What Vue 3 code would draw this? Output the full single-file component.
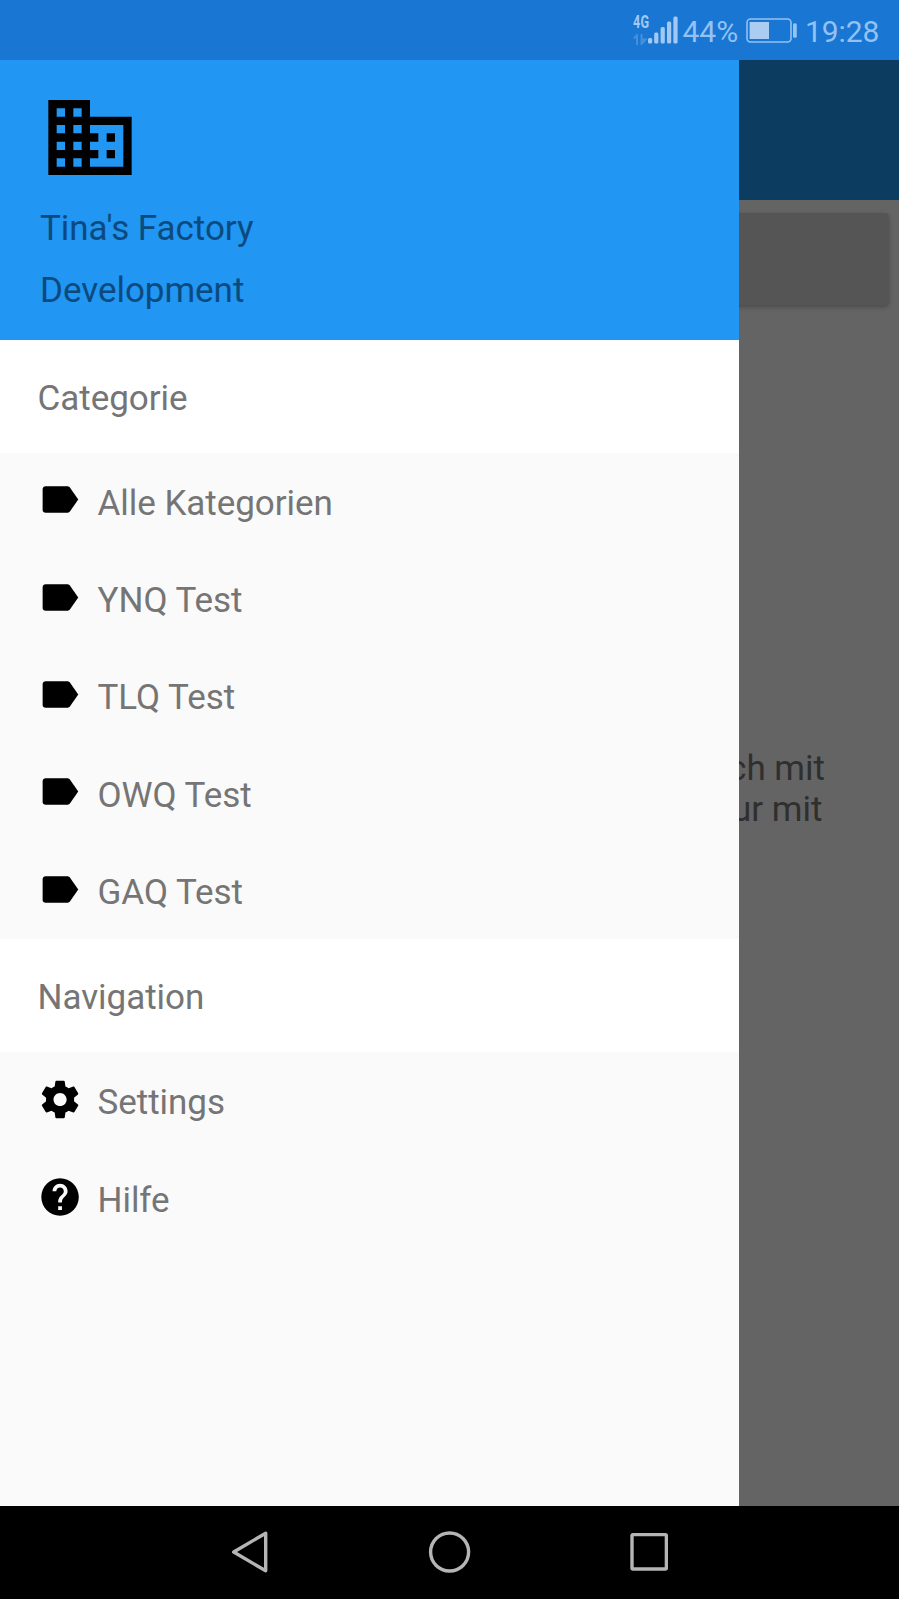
<script setup>
const categories = ['Alle Kategorien', 'YNQ Test', 'TLQ Test', 'OWQ Test', 'GAQ Test']
const icons = {
  label:
    'M17.63 5.7C17.27 5.2 16.67 4.9 16.1 4.9H4.6C3.7 4.9 3 5.5 3 6.4v11.2c0 .9.7 1.5 1.6 1.5h11.5c.57 0 1.17-.3 1.53-.8L22 12z',
  settings:
    'M19.43 12.98c.04-.32.07-.64.07-.98s-.03-.66-.07-.98l2.11-1.65c.19-.15.24-.42.12-.64l-2-3.46c-.12-.22-.39-.3-.61-.22l-2.49 1c-.52-.4-1.08-.73-1.69-.98l-.38-2.65C14.46 2.18 14.25 2 14 2h-4c-.25 0-.46.18-.49.42l-.38 2.65c-.61.25-1.17.59-1.69.98l-2.49-1c-.23-.09-.49 0-.61.22l-2 3.46c-.13.22-.07.49.12.64l2.11 1.65c-.04.32-.07.65-.07.98s.03.66.07.98l-2.11 1.65c-.19.15-.24.42-.12.64l2 3.46c.12.22.39.3.61.22l2.49-1c.52.4 1.08.73 1.69.98l.38 2.65c.03.24.24.42.49.42h4c.25 0 .46-.18.49-.42l.38-2.65c.61-.25 1.17-.59 1.69-.98l2.49 1c.23.09.49 0 .61-.22l2-3.46c.12-.22.07-.49-.12-.64l-2.11-1.65zM12 15.5c-1.93 0-3.5-1.57-3.5-3.5s1.57-3.5 3.5-3.5 3.5 1.57 3.5 3.5-1.57 3.5-3.5 3.5z',
  help:
    'M12 2C6.48 2 2 6.48 2 12s4.48 10 10 10 10-4.48 10-10S17.52 2 12 2zm1 17h-2v-2h2v2zm2.07-7.75l-.9.92C13.45 12.9 13 13.5 13 15h-2v-.5c0-1.1.45-2.1 1.17-2.83l1.24-1.26c.37-.36.59-.86.59-1.41 0-1.1-.9-2-2-2s-2 .9-2 2H8c0-2.21 1.79-4 4-4s4 1.79 4 4c0 .88-.36 1.68-.93 2.25z',
}
const sections = [
  {
    title: 'Categorie',
    items: categories.map((text) => ({ text, icon: icons.label, box: '0 0 24 24' })),
  },
  {
    title: 'Navigation',
    items: [
      { text: 'Settings', icon: icons.settings, box: '-0.3 0 24 24' },
      { text: 'Hilfe', icon: icons.help, box: '-0.3 -0.2 24 24' },
    ],
  },
]
</script>

<template>
  <div class="screen">
    <header class="status">
      <div class="network">
        <span class="gen">4G</span>
        <svg class="arrows" width="14" height="11" viewBox="0 0 14 11">
          <path d="M4 11V1L0.8 4.5M8.5 0v10l4-4.4H9" fill="none" stroke="currentColor" stroke-width="2" />
        </svg>
      </div>
      <svg class="signal" width="30" height="28" viewBox="0 0 30 28" fill="currentColor">
        <rect x="0" y="22" width="4.2" height="5.5" rx="1.5" />
        <rect x="6.2" y="16.5" width="4.2" height="11" rx="1.5" />
        <rect x="12.6" y="11" width="4.2" height="16.5" rx="1.5" />
        <rect x="19" y="5.5" width="4.2" height="22" rx="1.5" />
        <rect x="25.4" y="0.5" width="4.2" height="27" rx="1.5" />
      </svg>
      <span class="percent">44%</span>
      <svg class="battery" width="52" height="26" viewBox="0 0 52 26">
        <rect x="1" y="1" width="44" height="23" rx="3.5" fill="none" stroke="currentColor" stroke-width="1.6" />
        <rect x="3.6" y="4" width="19.4" height="17" fill="#abcdf2" />
        <rect x="47" y="5.2" width="3.8" height="14.5" rx="1.5" fill="currentColor" />
      </svg>
      <span class="time">19:28</span>
    </header>

    <div class="stage">
      <main class="page">
        <div class="appbar"></div>
        <div class="card"></div>
        <p class="message">ch mit<br /><span class="second">ur mit</span></p>
      </main>

      <aside class="drawer">
        <div class="profile">
          <svg class="building" viewBox="0 0.12 24 24">
            <path
              d="M12 7V3H2v18h20V7H12zM6 19H4v-2h2v2zm0-4H4v-2h2v2zm0-4H4V9h2v2zm0-4H4V5h2v2zm4 12H8v-2h2v2zm0-4H8v-2h2v2zm0-4H8V9h2v2zm0-4H8V5h2v2zm10 12h-8v-2h2v-2h-2v-2h2v-2h-2V9h8v10zm-2-8h-2v2h2v-2zm0 4h-2v2h2v-2z"
            />
          </svg>
          <div class="name">Tina's Factory</div>
          <div class="name">Development</div>
        </div>
        <section v-for="section in sections" :key="section.title">
          <h2 class="heading">{{ section.title }}</h2>
          <ul class="list">
            <li v-for="item in section.items" :key="item.text" class="item">
              <svg class="icon" :viewBox="item.box"><path :d="item.icon" /></svg>
              <span class="label">{{ item.text }}</span>
            </li>
          </ul>
        </section>
      </aside>
    </div>

    <nav class="navbar">
      <svg width="40" height="44" viewBox="0 0 40 44">
        <path d="M35.7 3.2v37.6L3.7 22z" />
      </svg>
      <svg width="44" height="44" viewBox="0 0 44 44"><circle cx="22.6" cy="22" r="19" /></svg>
      <svg width="40" height="44" viewBox="0 0 40 44">
        <rect x="4" y="4.6" width="34.4" height="34.4" rx="1" />
      </svg>
    </nav>
  </div>
</template>

<style>
body {
  margin: 0;
  background: #000;
}
</style>

<style scoped>
.screen {
  width: 899px;
  height: 1599px;
  display: flex;
  flex-direction: column;
  overflow: hidden;
  font-family: Roboto, sans-serif;
  font-size: 35px;
  color: #757575;
}
.status {
  height: 60px;
  box-sizing: border-box;
  display: flex;
  align-items: flex-start;
  padding-left: 633px;
  background: #1976d2;
  color: #93c2f3;
  white-space: nowrap;
}
.network {
  width: 15px;
  padding-top: 13px;
  display: flex;
  flex-direction: column;
}
.gen {
  font-size: 17.5px;
  line-height: 19px;
  font-weight: 700;
  color: #a3c9f3;
  transform: scaleX(0.72);
  transform-origin: left;
  letter-spacing: 0.5px;
}
.arrows {
  margin-top: 2px;
  opacity: 0.35;
}
.signal {
  margin: 16px 0 0 0;
  color: #a3c9f3;
}
.percent,
.time {
  font-size: 30px;
  line-height: 36px;
  margin-top: 14px;
}
.percent {
  width: 63px;
  margin-left: 4.5px;
}
.battery {
  margin-top: 18px;
}
.time {
  margin-left: 7.5px;
  letter-spacing: -0.1px;
}
.stage {
  position: relative;
  height: 1446px;
}
.page {
  height: 100%;
  background: #646464;
  overflow: hidden;
}
.appbar {
  height: 140px;
  background: #0c3c5f;
}
.card {
  height: 92px;
  margin: 13px 10px 0;
  border-radius: 4px;
  background: #555;
  box-shadow: 0 2px 4px rgba(0, 0, 0, 0.25);
}
.message {
  margin: 444px 74px 0 0;
  text-align: right;
  line-height: 40.5px;
  color: #2f2f2f;
}
.second {
  margin-right: 2.5px;
}
.drawer {
  position: absolute;
  top: 0;
  left: 0;
  width: 739px;
  height: 100%;
  background: #fafafa;
  letter-spacing: -0.04px;
}
.profile {
  height: 280px;
  box-sizing: border-box;
  padding: 28px 40px 0;
  background: #2196f3;
}
.building {
  display: block;
  width: 100px;
  height: 100px;
  margin-bottom: 10px;
}
.name {
  line-height: 62.4px;
  color: #0c4a7d;
}
.heading {
  margin: 0;
  height: 112.5px;
  padding-left: 37.5px;
  font-size: 35px;
  font-weight: 400;
  line-height: 118px;
  background: #fff;
}
.list {
  list-style: none;
  margin: 0;
  padding: 0;
}
.item {
  height: 97.4px;
  display: flex;
  align-items: center;
  padding-left: 37px;
}
.icon {
  width: 45px;
  height: 45px;
  margin: 0 15.5px 3px 0;
  fill: #000;
}
.label {
  line-height: 41px;
  margin-top: 4px;
}
.navbar {
  flex: 1;
  display: flex;
  justify-content: center;
  gap: 157px;
  padding: 24px 1px 0 0;
  background: #000;
}
.navbar svg {
  flex: none;
  fill: none;
  stroke: #b5b5b5;
  stroke-width: 3.4;
  stroke-linejoin: round;
}
</style>
